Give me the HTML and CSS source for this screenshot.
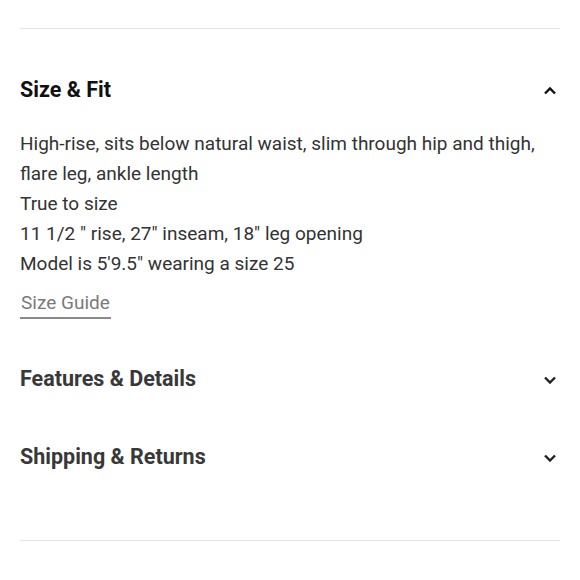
FILE: index.html
```html
<!DOCTYPE html>
<html lang="en">
<head>
<meta charset="utf-8">
<link rel="stylesheet" href="styles.css">
</head>
<body>
<div class="wrap">
  <div class="rule"></div>
  <section class="acc open">
    <div class="acc-head">
      <h2 class="acc-title">Size &amp; Fit</h2>
      <svg class="chev" width="14" height="9" viewBox="0 0 14 9"><polyline points="2,7.5 7,2.5 12,7.5" fill="none" stroke="currentColor" stroke-width="2.4"/></svg>
    </div>
    <div class="acc-body">
      <p>High-rise, sits below natural waist, slim through hip and thigh, flare leg, ankle length</p>
      <p>True to size</p>
      <p>11 1/2 " rise, 27" inseam, 18" leg opening</p>
      <p>Model is 5'9.5" wearing a size 25</p>
      <a class="guide" href="#">Size Guide</a>
    </div>
  </section>
  <section class="acc second">
    <div class="acc-head">
      <h2 class="acc-title">Features &amp; Details</h2>
      <svg class="chev" width="14" height="9" viewBox="0 0 14 9"><polyline points="2,2.5 7,7.5 12,2.5" fill="none" stroke="currentColor" stroke-width="2.4"/></svg>
    </div>
  </section>
  <section class="acc third">
    <div class="acc-head">
      <h2 class="acc-title">Shipping &amp; Returns</h2>
      <svg class="chev" width="14" height="9" viewBox="0 0 14 9"><polyline points="2,2.5 7,7.5 12,2.5" fill="none" stroke="currentColor" stroke-width="2.4"/></svg>
    </div>
  </section>
  <div class="rule bottom"></div>
</div>
</body>
</html>
```
FILE: styles.css
```css
html, body {
  margin: 0;
  padding: 0;
  background: #fff;
}
body {
  font-family: Roboto, "Liberation Sans", sans-serif;
  color: #333;
}
.wrap {
  padding: 28px 20px 0;
  display: flex;
  flex-direction: column;
}
.rule {
  height: 1px;
  background: #e3e3e3;
}
.rule.bottom {
  margin-top: 71px;
}
.acc {
  display: flex;
  flex-direction: column;
}
.acc.open { margin-top: 49px; }
.acc.second { margin-top: 48px; }
.acc.third { margin-top: 54px; }
.acc-head {
  display: flex;
  align-items: center;
  justify-content: space-between;
  height: 24px;
}
.acc-title {
  margin: 0;
  font-size: 21.5px;
  line-height: 24px;
  font-weight: 700;
  color: #383838;
}
.open .acc-title { color: #111; }
.chev {
  color: #222;
  margin-right: 3px;
}
.open .chev { color: #111; }
.acc-body {
  margin-top: 27px;
  display: flex;
  flex-direction: column;
  align-items: flex-start;
}
.acc-body p {
  margin: 0;
  font-size: 19px;
  line-height: 30px;
  color: #333;
}
.guide {
  margin-top: 12px;
  font-size: 19px;
  line-height: 24px;
  color: #7a7a7a;
  text-decoration: none;
  padding: 0 1px 2px;
  border-bottom: 2px solid #8a8a8a;
}
```
